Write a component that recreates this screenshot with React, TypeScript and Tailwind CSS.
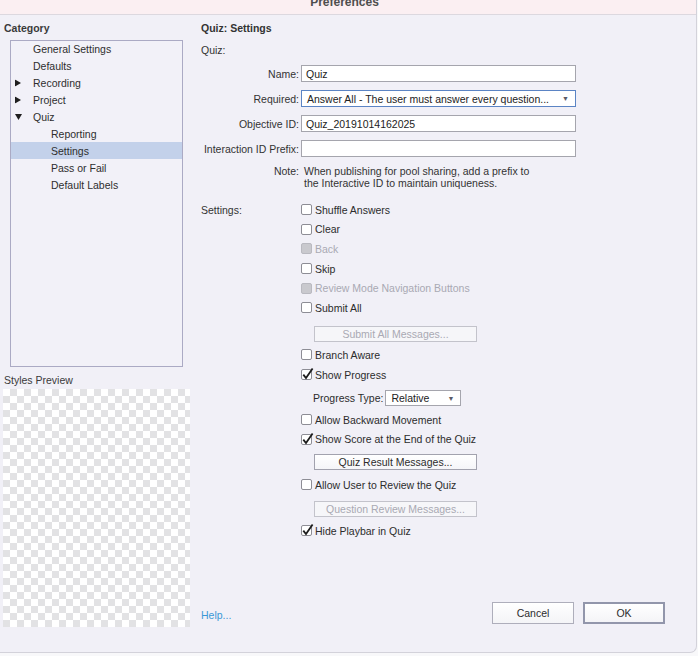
import React from "react";

type TreeItem = { label: string; indent: number; tri?: "right" | "down"; selected?: boolean };

const treeItems: TreeItem[] = [
  { label: "General Settings", indent: 0 },
  { label: "Defaults", indent: 0 },
  { label: "Recording", indent: 0, tri: "right" },
  { label: "Project", indent: 0, tri: "right" },
  { label: "Quiz", indent: 0, tri: "down" },
  { label: "Reporting", indent: 1 },
  { label: "Settings", indent: 1, selected: true },
  { label: "Pass or Fail", indent: 1 },
  { label: "Default Labels", indent: 1 },
];

function Triangle({ dir }: { dir: "right" | "down" }) {
  if (dir === "right") {
    return (
      <svg width="6" height="7" viewBox="0 0 6 7" className="block">
        <polygon points="0,0 6,3.5 0,7" fill="#1f1f1f" />
      </svg>
    );
  }
  return (
    <svg width="7" height="6" viewBox="0 0 7 6" className="block">
      <polygon points="0,0 7,0 3.5,6" fill="#1f1f1f" />
    </svg>
  );
}

function Check({ checked, disabled }: { checked?: boolean; disabled?: boolean }) {
  return (
    <span
      className={
        "relative block shrink-0 w-[11px] h-[11px] rounded-[2px] border " +
        (disabled ? "bg-[#c9c9ce] border-[#b9b9c0]" : "bg-white border-[#8d8d95]")
      }
    >
      {checked && (
        <svg
          width="14"
          height="14"
          viewBox="0 0 14 14"
          className="absolute left-[-1px] top-[-3px] overflow-visible"
        >
          <path d="M2.3 7.6 L5 11 L11.6 1.6" fill="none" stroke="#1c1c1c" strokeWidth="1.8" />
        </svg>
      )}
    </span>
  );
}

function CheckRow({
  label,
  checked,
  disabled,
  className = "",
}: {
  label: string;
  checked?: boolean;
  disabled?: boolean;
  className?: string;
}) {
  return (
    <div className={"flex items-center h-[19.6px] " + className}>
      <Check checked={checked} disabled={disabled} />
      <span className={"ml-[3px] " + (disabled ? "text-[#a9a9b3]" : "text-[#2c2c2c]")}>{label}</span>
    </div>
  );
}

function MsgButton({ label, disabled, className = "" }: { label: string; disabled?: boolean; className?: string }) {
  return (
    <div
      className={
        "ml-[13px] w-[163px] h-[16px] flex items-center justify-center border " +
        (disabled
          ? "border-[#c3c3cb] bg-[#f6f6f9] text-[#a9a9b3]"
          : "border-[#a2a2ae] bg-gradient-to-b from-white to-[#f5f5f8] text-[#2c2c2c]") +
        " " +
        className
      }
    >
      {label}
    </div>
  );
}

function FieldRow({ label, children, className = "" }: { label: string; children: React.ReactNode; className?: string }) {
  return (
    <div className={"flex items-center h-[17px] " + className}>
      <div className="w-[98px] text-right text-[#333]">{label}</div>
      <div className="ml-[2px]">{children}</div>
    </div>
  );
}

export default function App() {
  return (
    <div className="w-[698px] h-[656px] bg-[#f8f8fa] [font-family:'Liberation_Sans',Arial,sans-serif] text-[10.5px] leading-[14px] text-[#2f2f2f]">
      <div className="w-[697px] h-[653px] bg-[#f1f0f7] rounded-br-[7px] border-r border-b border-[#d3d2da] overflow-hidden flex flex-col">
        {/* Title bar */}
        <div className="h-[15px] shrink-0 bg-[#fbeff2] border-b border-[#dcd8df] overflow-hidden flex justify-center pr-[7px]">
          <span className="mt-[-5px] text-[12px] font-bold leading-[14px] text-[#4e4e4e]">Preferences</span>
        </div>

        <div className="flex flex-1">
          {/* Left column */}
          <div className="w-[201px] shrink-0 flex flex-col">
            <div className="mt-[6px] ml-[4px] font-bold text-[#3a3a3a]">Category</div>
            <div className="mt-[5px] ml-[10px] w-[173px] h-[327px] border border-[#abaac4] bg-[#f2f1f8] flex flex-col">
              {treeItems.map((it) => (
                <div
                  key={it.label}
                  className={
                    "relative h-[16.9px] flex items-center " +
                    (it.selected ? "bg-[#c3d1ea] " : "") +
                    (it.indent === 0 ? "pl-[22px]" : "pl-[40px]")
                  }
                >
                  {it.tri && (
                    <span className="absolute left-[4px] top-1/2 -translate-y-1/2">
                      <Triangle dir={it.tri} />
                    </span>
                  )}
                  <span className="text-[#2e2e2e]">{it.label}</span>
                </div>
              ))}
            </div>
            <div className="mt-[6px] ml-[4px] text-[#3a3a3a]">Styles Preview</div>
            <div className="mt-[2px] ml-[3px] w-[187px] h-[238px] [background-image:repeating-conic-gradient(#e2e2e4_0%_25%,#ffffff_0%_50%)] [background-size:14px_14px]" />
          </div>

          {/* Right column */}
          <div className="flex-1 flex flex-col">
            <div className="mt-[6px] font-bold text-[#333]">Quiz: Settings</div>
            <div className="mt-[8px] text-[#333]">Quiz:</div>

            <FieldRow label="Name:" className="mt-[8px]">
              <div className="w-[275px] h-[17px] border border-[#a5a5ad] bg-white pl-[4px] flex items-center text-[#222]">
                Quiz
              </div>
            </FieldRow>
            <FieldRow label="Required:" className="mt-[8px]">
              <div className="relative w-[275px] h-[17px] border border-[#5b84c4] bg-white pl-[5px] flex items-center text-[#222]">
                Answer All - The user must answer every question...
                <span className="absolute right-[6px] top-[4px] text-[7px] leading-[7px] text-[#5a5a66]">▼</span>
              </div>
            </FieldRow>
            <FieldRow label="Objective ID:" className="mt-[8px]">
              <div className="w-[275px] h-[17px] border border-[#a5a5ad] bg-white pl-[4px] flex items-center text-[#222]">
                Quiz_20191014162025
              </div>
            </FieldRow>
            <FieldRow label="Interaction ID Prefix:" className="mt-[8px]">
              <div className="w-[275px] h-[17px] border border-[#a5a5ad] bg-white" />
            </FieldRow>

            <div className="flex mt-[8px] leading-[12px]">
              <div className="w-[98px] text-right text-[#333]">Note:</div>
              <div className="ml-[5px] text-[#333]">
                When publishing for pool sharing, add a prefix to
                <br />
                the Interactive ID to maintain uniqueness.
              </div>
            </div>

            <div className="flex mt-[11px]">
              <div className="w-[100px] h-[19.6px] flex items-center text-[#333]">Settings:</div>
              <div className="flex flex-col">
                <CheckRow label="Shuffle Answers" />
                <CheckRow label="Clear" />
                <CheckRow label="Back" disabled />
                <CheckRow label="Skip" />
                <CheckRow label="Review Mode Navigation Buttons" disabled />
                <CheckRow label="Submit All" />
                <MsgButton label="Submit All Messages..." disabled className="mt-[8px]" />
                <CheckRow label="Branch Aware" className="mt-[3.6px]" />
                <CheckRow label="Show Progress" checked />
                <div className="flex items-center h-[16px] mt-[5.6px]">
                  <span className="ml-[12px] text-[#2c2c2c]">Progress Type:</span>
                  <div className="relative ml-[2px] w-[76px] h-[16px] border border-[#a5a5ad] bg-white pl-[5px] flex items-center text-[#222]">
                    Relative
                    <span className="absolute right-[6px] top-[4px] text-[7px] leading-[7px] text-[#5a5a66]">▼</span>
                  </div>
                </div>
                <CheckRow label="Allow Backward Movement" className="mt-[4px]" />
                <CheckRow label="Show Score at the End of the Quiz" checked />
                <MsgButton label="Quiz Result Messages..." className="mt-[4.6px]" />
                <CheckRow label="Allow User to Review the Quiz" className="mt-[5px]" />
                <MsgButton label="Question Review Messages..." disabled className="mt-[6.4px]" />
                <CheckRow label="Hide Playbar in Quiz" checked className="mt-[4px]" />
              </div>
            </div>

            <div className="flex items-center mt-[62px] pr-[31px]">
              <span className="mt-[4px] text-[#3a98d6]">Help...</span>
              <div className="flex-1" />
              <div className="w-[82px] h-[22px] flex items-center justify-center border border-[#aeaebb] bg-gradient-to-b from-white to-[#f4f4f7] text-[#2c2c2c]">
                Cancel
              </div>
              <div className="ml-[9px] w-[82px] h-[22px] flex items-center justify-center border-2 border-[#9296ab] bg-gradient-to-b from-white to-[#f4f4f7] text-[#2c2c2c]">
                OK
              </div>
            </div>
          </div>
        </div>
      </div>
    </div>
  );
}
